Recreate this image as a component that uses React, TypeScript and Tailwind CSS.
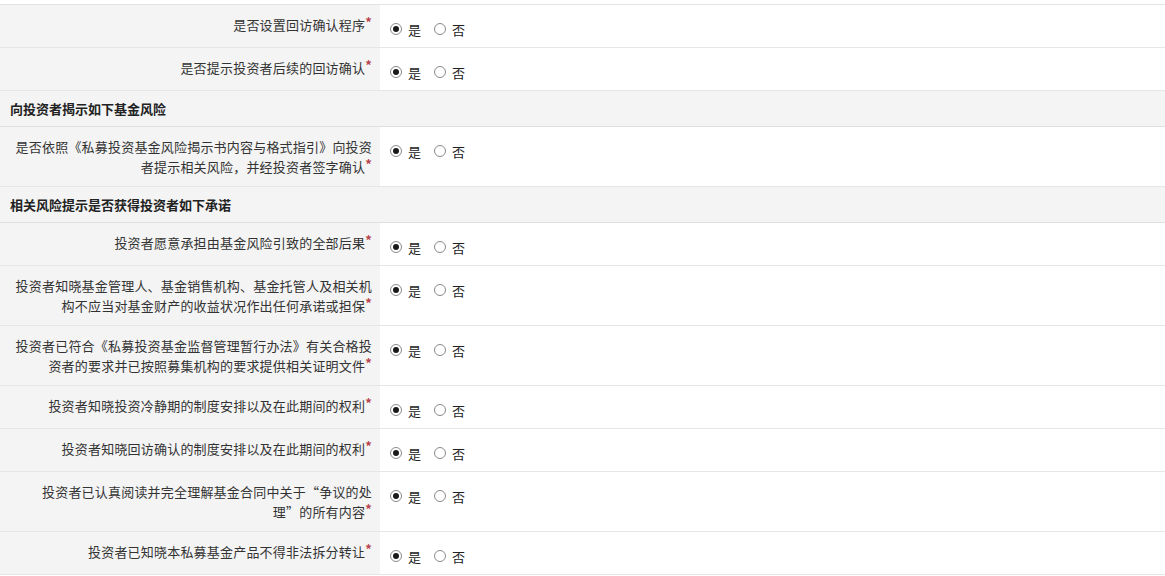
type Row =
	| { kind: 'header'; title: string }
	| { kind: 'question'; lines: string[] };

const rows: Row[] = [
	{ kind: 'question', lines: ['是否设置回访确认程序'] },
	{ kind: 'question', lines: ['是否提示投资者后续的回访确认'] },
	{ kind: 'header', title: '向投资者揭示如下基金风险' },
	{
		kind: 'question',
		lines: [
			'是否依照《私募投资基金风险揭示书内容与格式指引》向投资',
			'者提示相关风险，并经投资者签字确认',
		],
	},
	{ kind: 'header', title: '相关风险提示是否获得投资者如下承诺' },
	{ kind: 'question', lines: ['投资者愿意承担由基金风险引致的全部后果'] },
	{
		kind: 'question',
		lines: [
			'投资者知晓基金管理人、基金销售机构、基金托管人及相关机',
			'构不应当对基金财产的收益状况作出任何承诺或担保',
		],
	},
	{
		kind: 'question',
		lines: [
			'投资者已符合《私募投资基金监督管理暂行办法》有关合格投',
			'资者的要求并已按照募集机构的要求提供相关证明文件',
		],
	},
	{ kind: 'question', lines: ['投资者知晓投资冷静期的制度安排以及在此期间的权利'] },
	{ kind: 'question', lines: ['投资者知晓回访确认的制度安排以及在此期间的权利'] },
	{
		kind: 'question',
		lines: [
			'投资者已认真阅读并完全理解基金合同中关于“争议的处',
			'理”的所有内容',
		],
	},
	{ kind: 'question', lines: ['投资者已知晓本私募基金产品不得非法拆分转让'] },
];

const Radio = ({ checked, label }: { checked: boolean; label: string }) => (
	<label className="flex items-center">
		<span className="w-[12px] h-[12px] rounded-full border border-[#8a8a8a] bg-white flex items-center justify-center">
			{checked && <span className="w-[6px] h-[6px] rounded-full bg-[#1a1a1a]" />}
		</span>
		<span className="ml-[6px] text-[13px] text-[#222] relative top-[1px]">{label}</span>
	</label>
);

const App = () => {
	return (
		<div
			className="w-[1165px] h-[576px] bg-white overflow-hidden pt-[4px]"
			style={{ fontFamily: '"Noto Sans CJK SC", "Noto Sans", sans-serif' }}
		>
			<div className="border-t border-[#e2e2e2]">
				{rows.map((row, i) =>
					row.kind === 'header' ? (
						<div
							key={i}
							className="bg-[#f4f4f4] border-b border-[#e0e0e0] px-[10px] py-[8px] leading-[19px] text-[13px] font-bold text-[#222]"
						>
							{row.title}
						</div>
					) : (
						<div key={i} className="flex border-b border-[#e6e6e6]">
							<div className="w-[380px] shrink-0 bg-[#f4f4f4] text-right pl-[8px] pr-[8px] pt-[10px] pb-[9px] leading-[20px] text-[13px] text-[#333] tracking-[0.2px]">
								{row.lines.map((line, j) => (
									<div key={j}>
										{line}
										{j === row.lines.length - 1 && (
											<span className="relative -top-[3px] text-[13px] font-bold text-[#b8454a]">*</span>
										)}
									</div>
								))}
							</div>
							<div className="flex-1 bg-white pl-[10px] pt-[15px] pb-[9px]">
								<div className="flex items-center h-[18px] gap-[13px]">
									<Radio checked label="是" />
									<Radio checked={false} label="否" />
								</div>
							</div>
						</div>
					),
				)}
			</div>
		</div>
	);
};

export default App;
